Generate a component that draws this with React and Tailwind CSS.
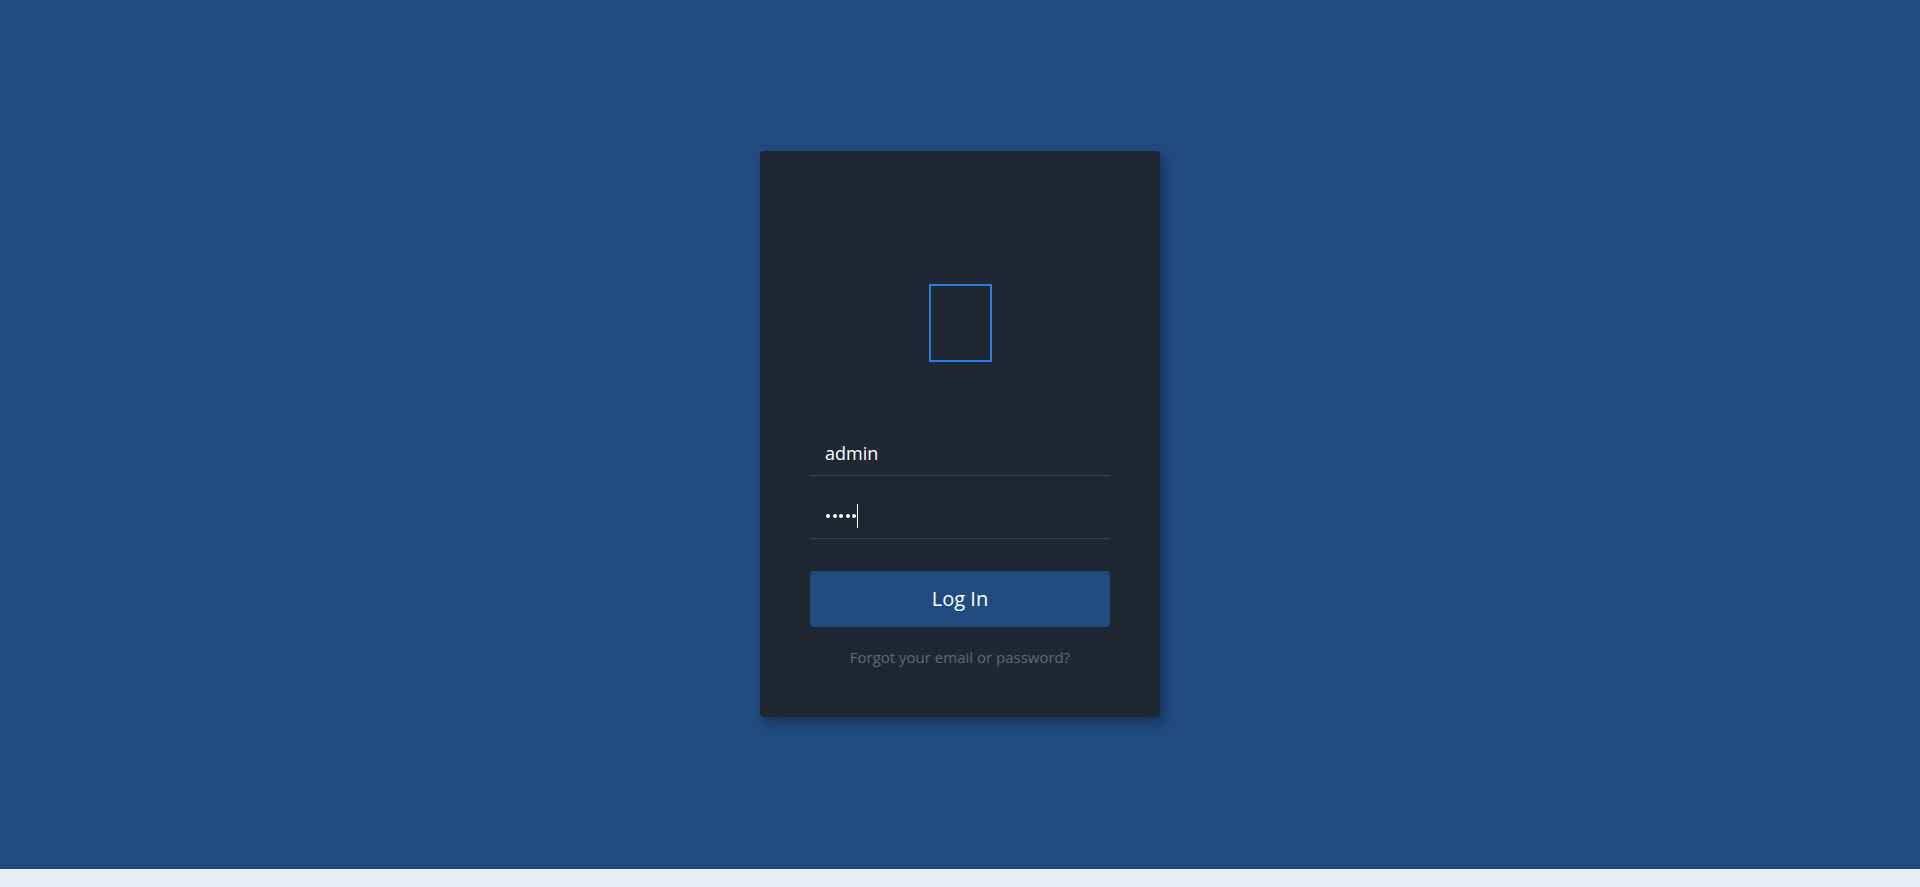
export default function App() {
  return (
    <div className="min-h-screen bg-[#e8ecf4]" style={{ fontFamily: '"Open Sans", "Noto Sans", sans-serif' }}>
      <div className="h-[869px] pb-[1px] bg-[#214a7f] flex items-center justify-center">
        <div className="w-[400px] h-[566px] bg-[#1f2732] rounded-[4px] shadow-[4px_6px_12px_rgba(0,0,0,0.3)] px-[50px] pt-[133px] flex flex-col">
          <div className="mx-auto w-[63px] h-[78px] border-2 border-[#2a7de1]"></div>

          <div className="mt-[69px] h-[45px] border-b border-[#39424e] flex items-center pl-[15px] text-[18px] text-white">
            admin
          </div>
          <div className="mt-[18px] h-[45px] border-b border-[#39424e] flex items-center pl-[16px]">
            <div className="flex items-center gap-[2.5px]">
              <span className="w-[4px] h-[4px] rounded-full bg-white"></span>
              <span className="w-[4px] h-[4px] rounded-full bg-white"></span>
              <span className="w-[4px] h-[4px] rounded-full bg-white"></span>
              <span className="w-[4px] h-[4px] rounded-full bg-white"></span>
              <span className="w-[4px] h-[4px] rounded-full bg-white"></span>
            </div>
            <span className="ml-[1px] w-px h-[24px] bg-white"></span>
          </div>

          <button className="mt-[32px] h-[56px] w-full rounded-[4px] bg-[#214a7f] text-white text-[20px]">
            Log In
          </button>

          <p className="mt-[19px] text-center text-[15px] leading-[22px] text-[#5f6a77]">
            Forgot your email or password?
          </p>
        </div>
      </div>
    </div>
  );
}
